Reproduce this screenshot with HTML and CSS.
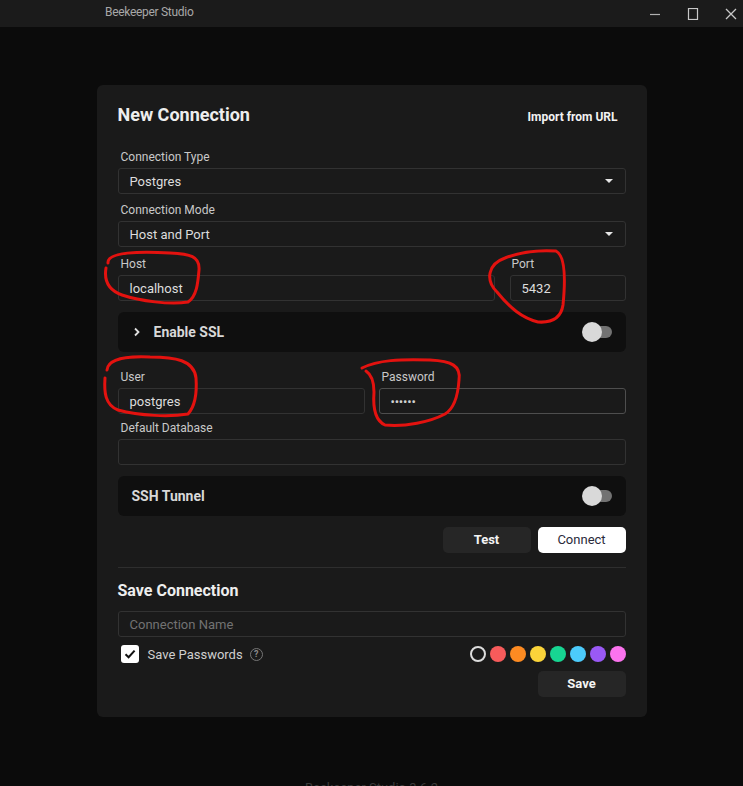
FILE: index.html
```html
<!DOCTYPE html>
<html>
<head>
<meta charset="utf-8">
<link rel="stylesheet" href="styles.css">
</head>
<body>
<div class="titlebar">
  <span class="app-title">Beekeeper Studio</span>
  <div class="win-controls">
    <svg class="win-btn" width="12" height="12" viewBox="0 0 12 12"><line x1="1" y1="6.5" x2="11" y2="6.5" stroke="#b0b0b0" stroke-width="1.2"/></svg>
    <svg class="win-btn" width="12" height="12" viewBox="0 0 12 12"><rect x="1.5" y="0.5" width="9" height="11" fill="none" stroke="#c8c8c8" stroke-width="1.2"/></svg>
    <svg class="win-btn" width="12" height="12" viewBox="0 0 12 12"><path d="M1 1 L11 11 M11 1 L1 11" stroke="#c8c8c8" stroke-width="1.3"/></svg>
  </div>
</div>

<main class="main">
  <section class="card">
    <div class="card-head">
      <h1 class="card-title">New Connection</h1>
      <span class="import-link">Import from URL</span>
    </div>

    <div class="group g-first">
      <div class="label">Connection Type</div>
      <div class="field select"><span>Postgres</span><span class="caret"></span></div>
    </div>
    <div class="group g-8">
      <div class="label">Connection Mode</div>
      <div class="field select"><span>Host and Port</span><span class="caret"></span></div>
    </div>
    <div class="row g-9">
      <div class="group grow">
        <div class="label">Host</div>
        <div class="field">localhost</div>
      </div>
      <div class="group port">
        <div class="label">Port</div>
        <div class="field">5432</div>
      </div>
    </div>

    <div class="panel g-11">
      <div class="panel-left">
        <svg class="chev" width="8" height="10" viewBox="0 0 8 10"><path d="M2 1.5 L5.5 5 L2 8.5" fill="none" stroke="#e0e0e0" stroke-width="1.8"/></svg>
        <span class="panel-title">Enable SSL</span>
      </div>
      <span class="toggle"></span>
    </div>

    <div class="row row-user g-17">
      <div class="group half">
        <div class="label">User</div>
        <div class="field">postgres</div>
      </div>
      <div class="group half">
        <div class="label">Password</div>
        <div class="field focused dots">••••••</div>
      </div>
    </div>

    <div class="group g-6">
      <div class="label">Default Database</div>
      <div class="field"></div>
    </div>

    <div class="panel g-11 panel-plain">
      <span class="panel-title">SSH Tunnel</span>
      <span class="toggle"></span>
    </div>

    <div class="actions g-11">
      <button class="btn btn-dark">Test</button>
      <button class="btn btn-light">Connect</button>
    </div>

    <hr class="divider">

    <h2 class="save-title">Save Connection</h2>
    <div class="field placeholder g-10">Connection Name</div>

    <div class="save-row">
      <div class="save-left">
        <span class="checkbox">
          <svg width="14" height="14" viewBox="0 0 14 14"><path d="M2.5 7.2 L5.6 10.2 L11.6 3.6" fill="none" stroke="#111" stroke-width="2"/></svg>
        </span>
        <span class="save-label">Save Passwords</span>
        <span class="help">?</span>
      </div>
      <div class="swatches">
        <span class="swatch none"></span>
        <span class="swatch" style="background:#f75b5b"></span>
        <span class="swatch" style="background:#fd8b22"></span>
        <span class="swatch" style="background:#fbd43a"></span>
        <span class="swatch" style="background:#17d592"></span>
        <span class="swatch" style="background:#4ccbfb"></span>
        <span class="swatch" style="background:#9a59f5"></span>
        <span class="swatch" style="background:#fb73ee"></span>
      </div>
    </div>

    <div class="actions g-8">
      <button class="btn btn-dark">Save</button>
    </div>
  </section>

  <div class="version">Beekeeper Studio 3.6.2</div>
</main>

<svg class="annotations" width="743" height="786" viewBox="0 0 743 786">
  <g fill="none" stroke="#e3120f" stroke-width="3" stroke-linecap="round" stroke-linejoin="round">
    <path d="M108,263 C107,252 140,251 170,253 C190,254 200,256 199,270 C198,282 197,296 188,302 C170,305 140,301 122,295 C108,290 104,280 106,268"/>
    <path d="M497,292 C485,280 488,264 505,258 C520,252 540,250 556,251 C566,256 565,285 563,305 C561,318 552,323 538,322 C522,318 510,308 497,292 Z"/>
    <path d="M107,370 C108,358 130,356 150,357 C175,357 194,360 196,378 C197,392 196,405 188,414 C170,417 140,416 118,410 C105,405 104,392 105,378"/>
    <path d="M362,368 C378,360 400,359 430,360 C452,361 461,366 459,380 C458,395 455,408 445,414 C430,422 405,427 385,425 C374,420 373,405 374,392 C374,382 372,375 366,371"/>
  </g>
</svg>
</body>
</html>
```

FILE: styles.css
```css
* { box-sizing: border-box; }

html, body {
  margin: 0;
  padding: 0;
  height: 786px;
  overflow: hidden;
}

body {
  background: #0b0b0b;
  font-family: Roboto, "Noto Sans", "Liberation Sans", sans-serif;
  color: #d6d6d6;
  position: relative;
}

.titlebar {
  height: 27px;
  background: #1b1b1b;
  display: flex;
  align-items: center;
  justify-content: space-between;
  padding-left: 105px;
  padding-bottom: 3px;
}

.app-title {
  font-size: 12px;
  color: #a8a8a8;
  letter-spacing: -0.3px;
}

.win-controls {
  display: flex;
  align-items: center;
  height: 100%;
  padding-right: 6px;
  padding-top: 3px;
}

.win-btn {
  margin-left: 26px;
}

.main {
  display: flex;
  flex-direction: column;
  align-items: center;
  padding-top: 58px;
}

.card {
  width: 550px;
  background: #1a1a1a;
  border-radius: 6px;
  padding: 19px 21px 20px 21px;
  display: flex;
  flex-direction: column;
}

.card-head {
  display: flex;
  justify-content: space-between;
  align-items: center;
  height: 22px;
}

.card-title {
  margin: 0;
  font-size: 18px;
  font-weight: 700;
  color: #eeeeee;
  line-height: 22px;
}

.import-link {
  font-size: 12px;
  font-weight: 700;
  color: #f2f2f2;
  margin-right: 8px;
  margin-top: 4px;
}

.group {
  display: flex;
  flex-direction: column;
}

.g-first { margin-top: 23px; }
.g-6 { margin-top: 6px; }
.g-8 { margin-top: 8px; }
.g-9 { margin-top: 9px; }
.g-10 { margin-top: 10px; }
.g-11 { margin-top: 11px; }
.g-17 { margin-top: 17px; }

.label {
  font-size: 12px;
  line-height: 16px;
  color: #c9c9c9;
  padding-left: 3px;
  margin-bottom: 3px;
}

.field {
  height: 26px;
  border: 1px solid #323232;
  border-radius: 3px;
  background: #1a1a1a;
  padding: 0 11px;
  display: flex;
  align-items: center;
  font-size: 13px;
  color: #dddddd;
}

.field.focused {
  border-color: #4e4e4e;
}

.field.dots {
  font-size: 13px;
  letter-spacing: -0.2px;
  color: #d0d0d0;
}

.field.placeholder {
  color: #727272;
}

.select {
  justify-content: space-between;
}

.caret {
  width: 0;
  height: 0;
  border-left: 4px solid transparent;
  border-right: 4px solid transparent;
  border-top: 4px solid #e6e6e6;
  margin-right: 1px;
}

.row {
  display: flex;
  gap: 15px;
}

.row-user {
  gap: 14px;
}

.grow { flex: 1; }
.port { width: 116px; }
.port .label { padding-left: 2px; }
.half { flex: 1; }

.panel {
  height: 40px;
  background: #0f0f0f;
  border-radius: 6px;
  display: flex;
  align-items: center;
  justify-content: space-between;
  padding: 0 14px 0 14px;
}

.panel-left {
  display: flex;
  align-items: center;
  gap: 13px;
}

.chev { margin-left: 1px; }

.panel-title {
  font-size: 14px;
  font-weight: 700;
  color: #d8d8d8;
}

.toggle {
  position: relative;
  width: 30px;
  height: 20px;
  display: inline-block;
}

.toggle::before {
  content: "";
  position: absolute;
  right: 0;
  top: 4px;
  width: 20px;
  height: 12px;
  border-radius: 6px;
  background: #727272;
}

.toggle::after {
  content: "";
  position: absolute;
  left: 0;
  top: 0;
  width: 20px;
  height: 20px;
  border-radius: 50%;
  background: #d9d9d9;
}

.actions {
  display: flex;
  justify-content: flex-end;
  gap: 7px;
}

.btn {
  width: 88px;
  height: 26px;
  border: none;
  border-radius: 5px;
  font-family: Roboto, "Noto Sans", "Liberation Sans", sans-serif;
  font-size: 13px;
  padding: 0 0 1px 0;
}

.btn-dark {
  background: #262626;
  color: #f4f4f4;
  font-weight: 700;
}

.btn-light {
  background: #ffffff;
  color: #2a2a3a;
  font-weight: 400;
}

.divider {
  border: none;
  border-top: 1px solid #2e2e2e;
  margin: 14px 0 0 0;
  height: 0;
}

.save-title {
  margin: 13px 0 0 0;
  font-size: 16px;
  font-weight: 700;
  line-height: 20px;
  color: #eeeeee;
}

.save-row {
  margin-top: 8px;
  display: flex;
  justify-content: space-between;
  align-items: center;
  height: 18px;
}

.save-left {
  display: flex;
  align-items: center;
  padding-left: 3px;
}

.checkbox {
  width: 18px;
  height: 18px;
  border-radius: 3px;
  background: #ffffff;
  display: flex;
  align-items: center;
  justify-content: center;
}

.save-label {
  margin-left: 9px;
  font-size: 13px;
  color: #cfcfcf;
}

.help {
  margin-left: 7px;
  width: 13px;
  height: 13px;
  border: 1.4px solid #767676;
  border-radius: 50%;
  color: #8a8a8a;
  font-size: 9px;
  font-weight: 700;
  display: flex;
  align-items: center;
  justify-content: center;
  line-height: 1;
}

.swatches {
  display: flex;
  gap: 4px;
}

.swatch {
  width: 16px;
  height: 16px;
  border-radius: 50%;
  display: inline-block;
}

.swatch.none {
  border: 2px solid #dcdcdc;
  background: transparent;
}

.version {
  margin-top: 63px;
  font-size: 13px;
  color: #3a3a3a;
}

.annotations {
  position: absolute;
  left: 0;
  top: 0;
  pointer-events: none;
}
```
